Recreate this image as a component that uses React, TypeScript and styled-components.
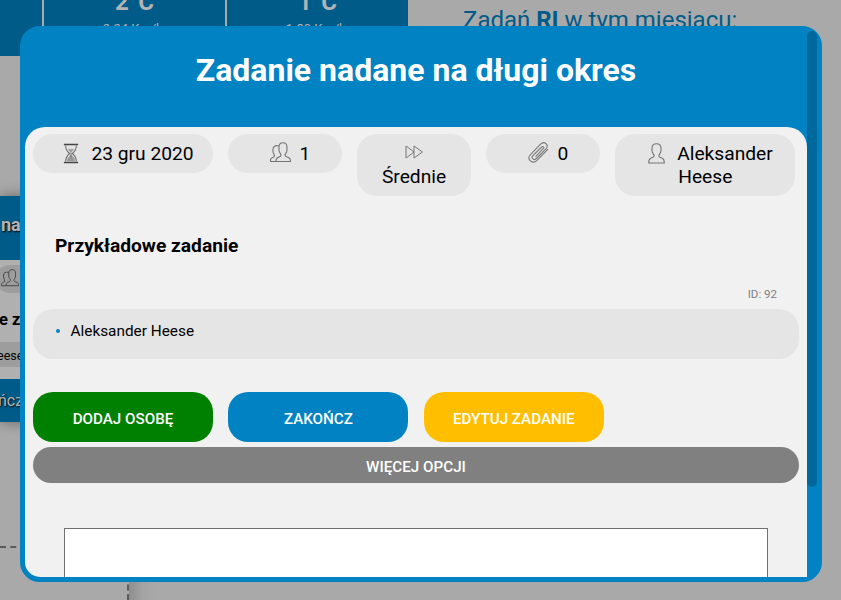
import React from 'react';
import styled, { createGlobalStyle } from 'styled-components';

const GlobalStyle = createGlobalStyle`
  * { box-sizing: border-box; }
  body { margin: 0; background: #a9a9a9; font-family: Roboto, "Liberation Sans", sans-serif; overflow: hidden; }
`;

const Page = styled.div`
  position: relative;
  width: 841px;
  height: 600px;
  overflow: hidden;
  background: #a9a9a9;
`;

const TopRow = styled.div`
  display: flex;
  height: 56px;
`;

const WeatherBar = styled.div`
  display: flex;
  width: 408px;
  background: #005b88;
`;

const WeatherCell = styled.div<{ $width: number; $divided?: boolean }>`
  width: ${(p) => p.$width}px;
  border-left: ${(p) => (p.$divided ? '2px solid #a9a9a9' : '0')};
  color: #b3b3b3;
  text-align: center;
  white-space: nowrap;
`;

const Temperature = styled.div`
  font-size: 24px;
  line-height: 28px;
  font-weight: 700;
  margin-top: -12px;
`;

const Wind = styled.div`
  padding-right: 3px;
  font-size: 13px;
  line-height: 14px;
  margin-top: 6px;
`;

const MonthSummary = styled.div`
  padding: 6px 0 0 55px;
  font-size: 24px;
  line-height: 28px;
  color: #005b88;
  white-space: nowrap;
`;

const TaskCard = styled.div`
  width: 40px;
  height: 226px;
  margin-top: 140px;
  background: #b0b0b0;
  box-shadow: 0 0 14px rgba(0, 0, 0, 0.4);
  white-space: nowrap;
`;

const CardTitle = styled.div`
  height: 64px;
  padding-left: 1px;
  background: #005b88;
  color: #b3b3b3;
  font-size: 18px;
  font-weight: 700;
  line-height: 58px;
  text-shadow: 1px 1px 2px #000;
`;

const CardPill = styled.div`
  height: 28px;
  margin: 5px 0 0 -4px;
  padding: 4px 0 0 5px;
  border-radius: 14px;
  background: #9d9d9d;
`;

const CardName = styled.div`
  height: 49px;
  margin-left: -1px;
  font-size: 16.500px;
  font-weight: 700;
  line-height: 53px;
`;

const CardPerson = styled.div`
  height: 25px;
  margin-left: -3px;
  background: #9d9d9d;
  font-size: 12.500px;
  line-height: 27px;
`;

const CardAction = styled.div`
  height: 43px;
  margin: 12px 0 0 -2px;
  background: #005b88;
  color: #b3b3b3;
  font-size: 16px;
  line-height: 43px;
  text-shadow: 1px 1px 2px #000;
`;

const DropZones = styled.div`
  display: flex;
  height: 54px;
  margin-top: 124px;
`;

const DropZone = styled.div`
  width: 129px;
  border-top: 2px dashed #5b5b5b;
  border-right: 2px dashed #5b5b5b;
`;

const ZoneShade = styled.div`
  width: 28px;
  background: linear-gradient(90deg, #8e8e8e, #a3a3a3 50%, #a9a9a9);
`;

const Modal = styled.section`
  position: absolute;
  left: 20px;
  top: 26px;
  display: flex;
  width: 802px;
  height: 556px;
  border: 5px solid #0082c3;
  border-radius: 20px;
  background: #0082c3;
`;

const ModalContent = styled.div`
  display: flex;
  flex-direction: column;
  width: 782px;
  height: 546px;
`;

const ScrollTrack = styled.div`
  width: 10px;
`;

const ScrollThumb = styled.div`
  height: 456px;
  border-radius: 5px;
  background: #00689c;
`;

const Heading = styled.h1`
  flex: none;
  height: 96px;
  margin: 0;
  padding-top: 20px;
  color: #fff;
  font-size: 32px;
  font-weight: 700;
  line-height: 38px;
  text-align: center;
`;

const Sheet = styled.div`
  flex: 1;
  padding: 7px 8px 0;
  border-radius: 20px 20px 0 15px;
  background: #f1f1f1;
  overflow: hidden;
`;

const Pills = styled.div`
  display: flex;
  align-items: flex-start;
  gap: 15px;
  height: 62px;
`;

const Pill = styled.div<{ $wide?: boolean; $stacked?: boolean }>`
  display: flex;
  flex-direction: ${(p) => (p.$stacked ? 'column' : 'row')};
  align-items: ${(p) => (p.$stacked ? 'center' : 'flex-start')};
  justify-content: ${(p) => (p.$stacked ? 'flex-start' : 'center')};
  width: ${(p) => (p.$wide ? 180 : 114)}px;
  padding: 8px 0 8px ${(p) => (p.$stacked ? 0 : p.$wide ? 11 : 10)}px;
  border-radius: 20px;
  background: #e5e5e5;
  color: #000;
  font-size: 19.2px;
  line-height: 23px;
`;

const IconSlot = styled.span<{ $gap?: number; $drop?: number }>`
  flex: none;
  display: block;
  height: 23px;
  padding-top: ${(p) => p.$drop ?? 0}px;
  margin-right: ${(p) => p.$gap ?? 0}px;
  svg { display: block; }
`;

const SecondLine = styled.span`
  display: block;
  padding-left: 1px;
`;

const TaskName = styled.h2`
  height: 24px;
  margin: 38px 0 0 22px;
  font-size: 19.2px;
  font-weight: 700;
  line-height: 24px;
`;

const TaskId = styled.div`
  margin-top: 28px;
  padding-right: 22px;
  height: 23px;
  color: #808080;
  font-size: 11.520px;
  line-height: 16px;
  text-align: right;
`;

const People = styled.ul`
  display: flex;
  flex-direction: column;
  height: 50px;
  margin: 0;
  padding: 12px 0 0 23px;
  border-radius: 20px;
  background: #e5e5e5;
  list-style: none;
`;

const Person = styled.li`
  display: flex;
  align-items: center;
  font-size: 15.360px;
  line-height: 20px;
  &::before {
    content: '';
    width: 4px;
    height: 4px;
    margin-right: 10.500px;
    border-radius: 2px;
    background: #0082c3;
  }
`;

const Actions = styled.div`
  display: flex;
  gap: 15.400px;
  margin-top: 33px;
`;

const ActionButton = styled.button<{ $color: string }>`
  width: 180px;
  height: 50px;
  padding: 4px 0 0;
  border: 0;
  border-radius: 20px;
  background: ${(p) => p.$color};
  color: #fff;
  font: 500 15.200px Roboto, sans-serif;
`;

const MoreButton = styled.button`
  display: block;
  width: 766px;
  height: 36px;
  margin-top: 5px;
  padding: 3px 0 0;
  border: 0;
  border-radius: 20px;
  background: #808080;
  color: #fff;
  font: 500 15.200px Roboto, sans-serif;
`;

const CommentBox = styled.div`
  width: 704px;
  height: 100px;
  margin: 45px 0 0 31px;
  border: 1px solid #707070;
  background: #fff;
`;

const Hourglass = () => (
  <svg width="16" height="21" viewBox="0 0 18 22" preserveAspectRatio="none" fill="none" stroke="#666">
    <path d="M1 1.5h16M1 20.5h16" stroke="#444" strokeWidth="1.6" />
    <path d="M3 2.5c0 4 1 6 4.5 8.5C4 13.500 3 15.500 3 19.500M15 2.500c0 4-1 6-4.500 8.500 3.500 2.500 4.500 4.500 4.500 8.500" strokeWidth="1.1" />
    <path d="M5.500 6.500h7L9 10zM9 12l-4 4.500-.5 3h9l-.5-3z" fill="#999" stroke="#aaa" strokeWidth=".5" />
    <path d="M9 10v5" stroke="#777" />
  </svg>
);

const PeopleIcon = ({ size = 21, color = '#747474' }: { size?: number; color?: string }) => (
  <svg width={size} height={size} viewBox="0 0 21 21" fill="none" stroke={color} strokeWidth="1.1">
    <path d="M6 19.500h14.500c0-2.500-.5-3.500-2-4-2-.6-3.500-.8-3.500-2.500 0-1 2-2.500 2-5V5c0-3-1.500-4.200-4-4.200S9 2 9 5v3c0 2.500 2 4 2 5 0 1.700-1.500 2-3.200 2.500-1.400.5-1.800 1.700-1.800 4z" />
    <path d="M8.800 4C5.500 3 3 4.500 3 7v2.500c0 2 1.500 3 1.500 4.500S1.500 15.500.8 17c-.3.800-.3 1.700-.3 2.500h5.500" />
  </svg>
);

const PersonIcon = () => (
  <svg width="17" height="21" viewBox="0 0 17 21" fill="none" stroke="#777" strokeWidth="1.1">
    <path d="M.7 20h15.600c0-3-.4-4-2-4.700-1.900-.8-3.500-.8-3.500-2.500 0-1 2.200-2.700 2.200-5.300V5.200C13 2 11.500.8 8.500.8S4 2 4 5.200v2.300c0 2.600 2.200 4.300 2.200 5.300 0 1.700-1.600 1.700-3.500 2.500C1.100 16 .7 17 .7 20z" />
  </svg>
);

const ForwardIcon = () => (
  <svg width="19" height="14" viewBox="0 0 19 14" fill="none" stroke="#777">
    <path d="M1 1v12l8-6zM9 1v12l8.500-6z" />
  </svg>
);

const ClipIcon = () => (
  <svg width="21" height="21" viewBox="0 0 21 21" fill="none" stroke="#777" strokeWidth="1.100" strokeLinecap="round">
    <path d="M19.800 7.300 9 18.300c-4.700 4.400-10.800-.8-6.500-5.800L12.300 2.300c4.200-4 9 .6 5.600 4.500l-9.500 9.700c-2.700 2.400-5.500-.3-3.500-2.800L13.700 5c1.500-1.100 2.700.2 1.800 1.300l-7.700 8" />
  </svg>
);

export default function App() {
  return (
    <>
      <GlobalStyle />
      <Page>
        <TopRow>
          <WeatherBar>
            <WeatherCell $width={42} />
            <WeatherCell $width={183} $divided>
              <Temperature>2°C</Temperature>
              <Wind>2.24 Km/h</Wind>
            </WeatherCell>
            <WeatherCell $width={183} $divided>
              <Temperature>1°C</Temperature>
              <Wind>1.80 Km/h</Wind>
            </WeatherCell>
          </WeatherBar>
          <MonthSummary>Zadań <b>RI</b> w tym miesiącu:</MonthSummary>
        </TopRow>
        <TaskCard>
          <CardTitle>na</CardTitle>
          <CardPill><PeopleIcon size={18} color="#444" /></CardPill>
          <CardName>e z</CardName>
          <CardPerson>eese</CardPerson>
          <CardAction>ńcz</CardAction>
        </TaskCard>
        <DropZones>
          <DropZone />
          <ZoneShade />
        </DropZones>
        <Modal>
          <ModalContent>
            <Heading>Zadanie nadane na długi okres</Heading>
            <Sheet>
              <Pills>
                <Pill $wide><IconSlot $gap={12} $drop={1}><Hourglass /></IconSlot>23 gru 2020</Pill>
                <Pill><IconSlot $gap={9}><PeopleIcon /></IconSlot>1</Pill>
                <Pill $stacked><IconSlot $drop={3}><ForwardIcon /></IconSlot>Średnie</Pill>
                <Pill><IconSlot $gap={9}><ClipIcon /></IconSlot>0</Pill>
                <Pill $wide>
                  <IconSlot $gap={12} $drop={1}><PersonIcon /></IconSlot>
                  <span>Aleksander<SecondLine>Heese</SecondLine></span>
                </Pill>
              </Pills>
              <TaskName>Przykładowe zadanie</TaskName>
              <TaskId>ID: 92</TaskId>
              <People><Person>Aleksander Heese</Person></People>
              <Actions>
                <ActionButton $color="#008000">DODAJ OSOBĘ</ActionButton>
                <ActionButton $color="#0082c3">ZAKOŃCZ</ActionButton>
                <ActionButton $color="#ffbf00">EDYTUJ ZADANIE</ActionButton>
              </Actions>
              <MoreButton>WIĘCEJ OPCJI</MoreButton>
              <CommentBox />
            </Sheet>
          </ModalContent>
          <ScrollTrack><ScrollThumb /></ScrollTrack>
        </Modal>
      </Page>
    </>
  );
}
